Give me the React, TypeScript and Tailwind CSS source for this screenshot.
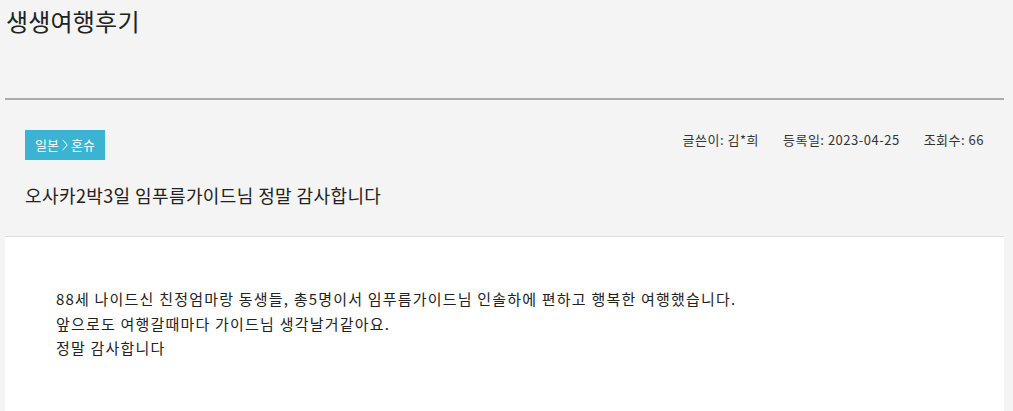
const font = "font-['Malgun_Gothic','Noto_Sans_CJK_KR',sans-serif]";

function MetaItem({ label, value }: Readonly<{ label: string; value: string }>) {
  return (
    <span className="whitespace-nowrap">
      {label}: {value}
    </span>
  );
}

function Chevron() {
  return (
    <svg className="mx-[3px] h-[12px] w-[6px]" viewBox="0 0 6 12" fill="none">
      <path d="M0.8 0.8 L5.2 6 L0.8 11.2" stroke="white" strokeWidth="1" />
    </svg>
  );
}

export default function App() {
  return (
    <div className={`${font} bg-[#f4f4f4] min-h-[411px] w-[1013px] overflow-hidden text-[#222]`}>
      <div className="ml-[5px] w-[999px]">
        <h1 className="h-[98px] pl-[1px] pt-[3px] text-[24px] leading-[36px] font-normal tracking-[0.2px] text-[#222]">
          생생여행후기
        </h1>
        <div className="h-[2px] bg-[#aaaaaa]" />

        <div className="h-[137px] px-[20px] pt-[30px] border-b border-[#dddddd]">
          <div className="flex items-start justify-between">
            <span className="inline-flex h-[30px] w-[80px] items-center justify-center bg-[#3ab4d1] text-[13px] text-white">
              <span>일본</span>
              <Chevron />
              <span>혼슈</span>
            </span>
            <div className="flex gap-[24px] pt-[1px] text-[13px] leading-[18px] tracking-[0.5px] text-[#333]">
              <MetaItem label="글쓴이" value="김*희" />
              <MetaItem label="등록일" value="2023-04-25" />
              <MetaItem label="조회수" value="66" />
            </div>
          </div>
          <h2 className="mt-[22px] text-[18px] leading-[26px] font-normal tracking-[0.4px] text-[#222]">
            오사카2박3일 임푸름가이드님 정말 감사합니다
          </h2>
        </div>

        <div className="bg-white h-[180px] pl-[51px] pt-[50px] text-[15px] leading-[24.5px] tracking-[1.2px] text-[#222]">
          <p>88세 나이드신 친정엄마랑 동생들, 총5명이서 임푸름가이드님 인솔하에 편하고 행복한 여행했습니다.</p>
          <p>앞으로도 여행갈때마다 가이드님 생각날거같아요.</p>
          <p>정말 감사합니다</p>
        </div>
      </div>
    </div>
  );
}
